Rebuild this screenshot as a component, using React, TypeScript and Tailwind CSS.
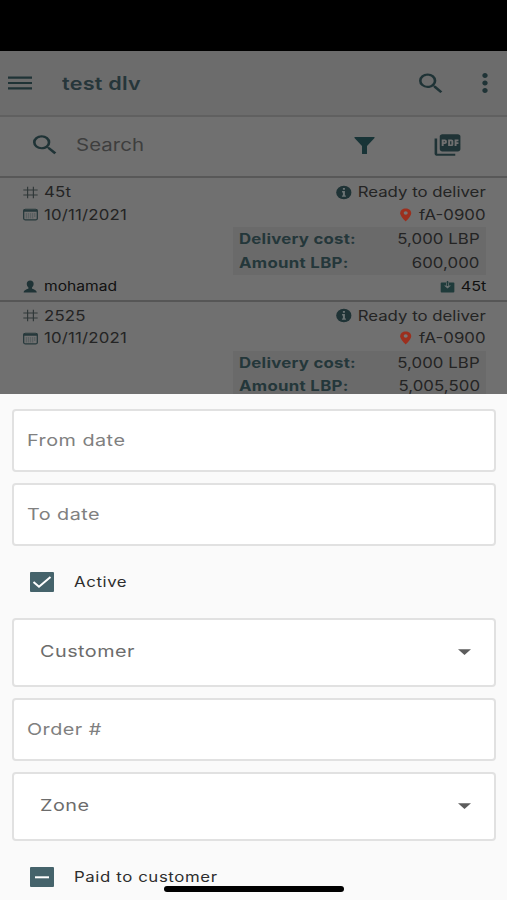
import type { ReactNode } from "react";
import { clsx } from "clsx";
import { MdMenu, MdSearch, MdMoreVert, MdPictureAsPdf } from "react-icons/md";

const deliveries = [
  {
    id: "45t",
    date: "10/11/2021",
    status: "Ready to deliver",
    zone: "fA-0900",
    cost: "5,000 LBP",
    amount: "600,000",
    customer: "mohamad",
    tag: "45t",
  },
  {
    id: "2525",
    date: "10/11/2021",
    status: "Ready to deliver",
    zone: "fA-0900",
    cost: "5,000 LBP",
    amount: "5,005,500",
  },
];

function Wide({ children, right, className }: { children: ReactNode; right?: boolean; className?: string }) {
  return (
    <span
      className={clsx(
        "flex items-center whitespace-nowrap scale-x-[1.2]",
        right ? "origin-right" : "origin-left",
        className
      )}
    >
      {children}
    </span>
  );
}

function HashIcon() {
  return (
    <svg className="w-[12.5px] h-[13px] shrink-0" viewBox="0 0 13 13" fill="none" stroke="#303839" strokeWidth="1">
      <path d="M4 .5v12M9 .5v12M.3 4h12.4M.3 9h12.4" />
    </svg>
  );
}

function CalendarIcon() {
  return (
    <svg className="w-[12.5px] h-[13px] shrink-0" viewBox="0 0 13 13" fill="none">
      <rect x=".6" y="1.1" width="11.8" height="11" rx="1.5" stroke="#26383b" strokeWidth="1.1" />
      <path d="M.6 2.6h11.8" stroke="#26383b" strokeWidth="2.2" />
      <path d="M2.4 6h8.4M2.4 8h8.4M2.4 10h7" stroke="#435052" strokeWidth="1" strokeDasharray="1.1 .7" />
    </svg>
  );
}

function PersonIcon() {
  return (
    <svg className="w-[12px] h-[13px] shrink-0" viewBox="0 0 13 13" preserveAspectRatio="none" fill="#1f3336">
      <path d="M6.5.4c2 0 3.1 1.3 3.1 3.3 0 1.7-.7 3-1.5 3.7v1.2c.5.8 4.3 1.2 4.3 3.8H.6C.6 9.8 4.4 9.4 4.9 8.6V7.4C4.1 6.7 3.4 5.4 3.4 3.7 3.4 1.7 4.5.4 6.5.4z" />
    </svg>
  );
}

function InfoIcon() {
  return (
    <svg className="w-[13px] h-[15px] shrink-0" viewBox="0 0 13 13" preserveAspectRatio="none">
      <ellipse cx="6.5" cy="6.5" rx="6.4" ry="5.9" fill="#1f3336" />
      <path d="M5.7 2.5h1.7v1.6H5.7zM5 5.2h2.4v3.8h.8v1.2H4.900V9h.8V6.400H5z" fill="#6c7475" />
    </svg>
  );
}

function PinIcon() {
  return (
    <svg className="w-[10px] h-[14px] shrink-0" viewBox="0 0 10 14">
      <path d="M5 .6C2.4.6.4 2.6.4 5.2.4 8.4 5 13.3 5 13.3s4.6-4.9 4.6-8.1C9.6 2.6 7.6.6 5 .6z" fill="#9c2f1e" />
      <circle cx="5" cy="5" r="1.7" fill="#777" />
    </svg>
  );
}

function ParcelIcon() {
  return (
    <svg className="w-[12px] h-[13px] shrink-0" viewBox="0 0 12 13">
      <rect x=".2" y="2.6" width="11.6" height="9.8" rx="1" fill="#1f3b3b" />
      <path d="M4.8 2.6h2.4v3h1.7L6 8.5 3.1 5.6h1.7z" fill="#6b7272" />
      <path d="M6 1v5" stroke="#1f3b3b" strokeWidth="1.2" />
    </svg>
  );
}

function DeliveryRow({ item }: { item: (typeof deliveries)[number] }) {
  return (
    <div className="h-[123.5px] shrink-0 border-b-2 border-[#565656] pl-[23px] pr-[21px] pt-[3px] text-[14px] leading-[22.5px] tracking-[0.15px] text-[#242424]">
      <div className="flex justify-between">
        <Wide className="gap-[5px]">
          <HashIcon />
          {item.id}
        </Wide>
        <Wide right className="gap-[5px] tracking-[0px]">
          <InfoIcon />
          {item.status}
        </Wide>
      </div>
      <div className="flex justify-between">
        <Wide className="gap-[5px]">
          <CalendarIcon />
          {item.date}
        </Wide>
        <Wide right className="gap-[6px] tracking-[0px]">
          <PinIcon />
          {item.zone}
        </Wide>
      </div>
      <div className="ml-auto mt-[1px] flex h-[48px] w-[253px] flex-col bg-[#6a6a6a] px-[6px] leading-[23.5px]">
        <div className="flex justify-between">
          <Wide className="font-bold tracking-[0.2px] text-[#24373a]">Delivery cost:</Wide>
          <Wide right className="tracking-[0.05px]">{item.cost}</Wide>
        </div>
        <div className="flex justify-between">
          <Wide className="font-bold tracking-[0.25px] text-[#24373a]">Amount LBP:</Wide>
          <Wide right className="tracking-[0.05px]">{item.amount}</Wide>
        </div>
      </div>
      {item.customer && (
        <div className="flex justify-between text-[13px] tracking-[0px] text-[#101010]">
          <Wide className="gap-[5.5px]">
            <PersonIcon />
            {item.customer}
          </Wide>
          <Wide right className="gap-[5px] text-[13.5px]">
            <ParcelIcon />
            {item.tag}
          </Wide>
        </div>
      )}
    </div>
  );
}

function Field({ label, select }: { label: string; select?: boolean }) {
  return (
    <div
      className={clsx(
        "flex items-center justify-between rounded-[4px] border-2 border-[#e1e1e1] bg-white text-[16.5px] tracking-[0.4px]",
        select ? "h-[69px] pb-[2px] pl-[26px] pr-[23px] text-[#6c6c6c]" : "h-[63px] pl-[13px] text-[#808080]"
      )}
    >
      <Wide>{label}</Wide>
      {select && (
        <svg className="h-[6px] w-[13px]" viewBox="0 0 13 6" fill="#5c5c5c">
          <path d="M0 .2h13L6.5 6z" />
        </svg>
      )}
    </div>
  );
}

function CheckRow({ label, checked }: { label: string; checked?: boolean }) {
  return (
    <div className="flex h-5 items-center gap-5 pl-[18px] text-[14px] tracking-[0.5px] text-[#2d2d2d]">
      <svg className="h-5 w-6 shrink-0" viewBox="0 0 24 20" fill="none" stroke="#fff" strokeWidth="2">
        <rect width="24" height="20" rx="1" fill="#45636b" stroke="none" />
        {checked ? <path d="M3.5 10l5.5 4.7L20.5 5" /> : <path d="M5 10.3h14" />}
      </svg>
      <Wide className="pb-[2px]">{label}</Wide>
    </div>
  );
}

export default function App() {
  return (
    <div className="relative flex h-[900px] w-[507px] flex-col overflow-hidden bg-[#707070] font-['Inter',sans-serif]">
      <div className="h-[51px] shrink-0 bg-black" />

      <header className="flex h-[66px] shrink-0 items-center border-b-2 border-[#606060] bg-[#6c6c6c] text-[#1f3336]">
        <MdMenu className="ml-[4px] h-[26px] w-[32px]" preserveAspectRatio="none" />
        <div className="ml-[26px] flex-1 text-[18px] font-semibold tracking-[0.2px] text-[#26363a]">
          <Wide>test dlv</Wide>
        </div>
        <MdSearch className="h-[27px] w-[32px]" preserveAspectRatio="none" />
        <MdMoreVert className="ml-[22px] mr-[6px] h-[30px] w-[32px]" preserveAspectRatio="none" />
      </header>

      <div className="flex h-[61px] shrink-0 items-center border-b-2 border-[#585858] pb-[3px] text-[#1f3336]">
        <MdSearch className="ml-[29px] h-[26px] w-[32px]" preserveAspectRatio="none" />
        <div className="ml-[15px] flex-1 pt-[2px] text-[17px] tracking-[0.05px] text-[#3e3e3e]">
          <Wide>Search</Wide>
        </div>
        <svg className="h-[17px] w-[21px]" viewBox="0 0 21 17" fill="#183437">
          <path d="M1 0h19q1 .2.500 1l-7.500 8v7.500q0 .5-.5.500h-4q-.5 0-.5-.5V9L.5 1Q0 .2 1 0z" />
        </svg>
        <MdPictureAsPdf className="ml-[57px] mr-[44px] h-[26px] w-[31px]" preserveAspectRatio="none" />
      </div>

      <div className="h-[216px] shrink-0 overflow-hidden">
        {deliveries.map((item) => (
          <DeliveryRow key={item.id} item={item} />
        ))}
      </div>

      <section className="flex flex-1 flex-col bg-[#fafafa] pl-[12px] pr-[11px] pt-[15px]">
        <div className="flex flex-col gap-[11px]">
          <Field label="From date" />
          <Field label="To date" />
        </div>
        <div className="py-[26px]">
          <CheckRow label="Active" checked />
        </div>
        <div className="flex flex-col gap-[11px]">
          <Field label="Customer" select />
          <Field label="Order #" />
          <Field label="Zone" select />
        </div>
        <div className="pt-[26px]">
          <CheckRow label="Paid to customer" />
        </div>
      </section>

      <div className="absolute bottom-[8px] left-[164px] h-[6px] w-[180px] rounded-full bg-black" />
    </div>
  );
}
